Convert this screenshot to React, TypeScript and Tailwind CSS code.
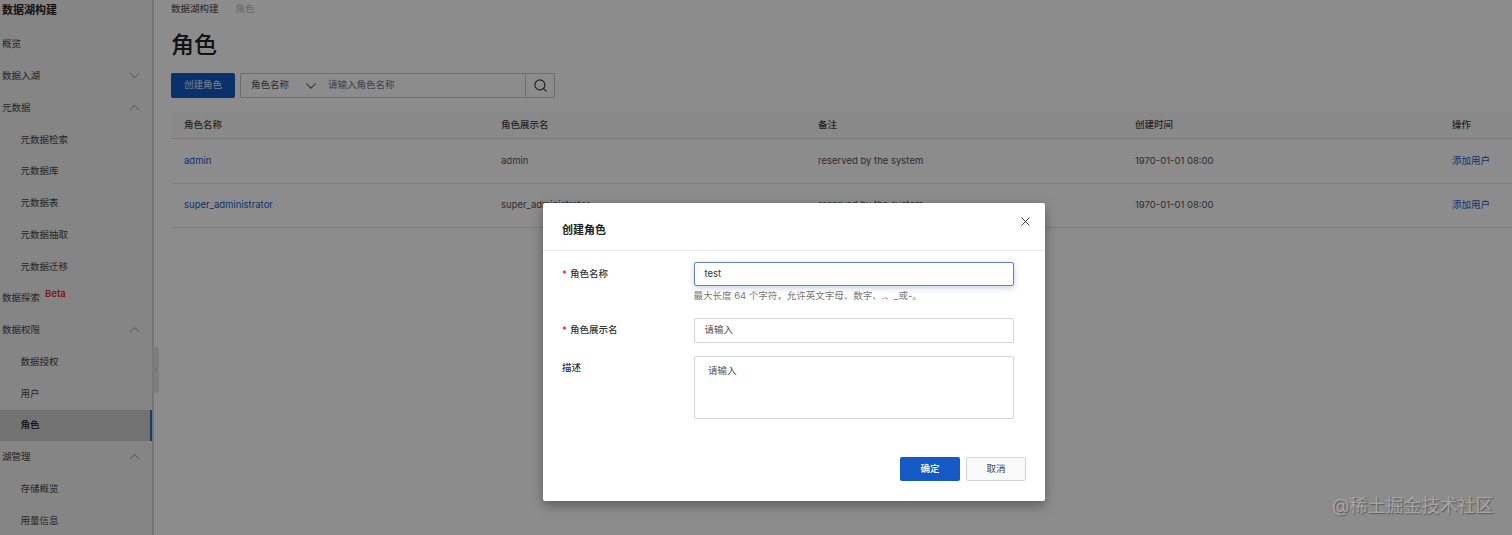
import { ChevronDown, ChevronUp, ChevronLeft, Search, X } from "lucide-react";

const font = { fontFamily: 'Inter, "Noto Sans CJK SC", sans-serif' };

type NavItem = { label: string; sub?: boolean; arrow?: "up" | "down"; active?: boolean; beta?: boolean };

const nav: NavItem[] = [
  { label: "概览" },
  { label: "数据入湖", arrow: "down" },
  { label: "元数据", arrow: "up" },
  { label: "元数据检索", sub: true },
  { label: "元数据库", sub: true },
  { label: "元数据表", sub: true },
  { label: "元数据抽取", sub: true },
  { label: "元数据迁移", sub: true },
  { label: "数据探索", beta: true },
  { label: "数据权限", arrow: "up" },
  { label: "数据授权", sub: true },
  { label: "用户", sub: true },
  { label: "角色", sub: true, active: true },
  { label: "湖管理", arrow: "up" },
  { label: "存储概览", sub: true },
  { label: "用量信息", sub: true },
];

const rows = [
  ["admin", "admin", "reserved by the system", "1970-01-01 08:00"],
  ["super_administrator", "super_administrator", "reserved by the system", "1970-01-01 08:00"],
];

function Sidebar() {
  return (
    <aside className="relative w-[154px] shrink-0 border-r-2 border-[#d8d8d8] bg-[#f3f3f3] h-[535px] overflow-hidden">
      <div className="h-[20px] pl-[2px] flex items-center text-[11px] font-bold text-[#222]">数据湖构建</div>
      <div className="pt-[8.5px]">
        {nav.map((n) => (
          <div
            key={n.label}
            className={
              "relative flex items-center h-[31.75px] text-[9.5px] " +
              (n.sub ? "pl-[20.5px] " : "pl-[2px] ") +
              (n.active ? "bg-[#d0d0d0] text-[#111] font-medium" : "text-[#444]")
            }
          >
            <span>{n.label}</span>
            {n.beta && <span className="ml-[5px] -mt-[8px] text-[9.5px] font-semibold text-[#d93026]">Beta</span>}
            {n.arrow === "down" && <ChevronDown className="absolute left-[126px] top-[7px] w-[17px] h-[17px] text-[#888]" strokeWidth={1.2} />}
            {n.arrow === "up" && <ChevronUp className="absolute left-[126px] top-[7px] w-[17px] h-[17px] text-[#888]" strokeWidth={1.2} />}
            {n.active && <span className="absolute right-0 top-0 bottom-0 w-[2px] bg-[#2f6fc4]" />}
          </div>
        ))}
      </div>
    </aside>
  );
}

function Page() {
  return (
    <main className="flex-1 min-w-0 pl-[17px] bg-white h-[535px] overflow-hidden">
      <div className="h-[19px] flex items-center text-[9.5px] text-[#444]">
        <span>数据湖构建</span>
        <span className="ml-[17px] text-[#c4c4c4]">角色</span>
      </div>
      <h1 className="mt-[11px] h-[30px] leading-[30px] text-[23px] font-medium text-[#222]">角色</h1>
      <div className="mt-[13px] flex items-center h-[25px]">
        <button className="w-[64px] h-[25px] rounded-[2px] bg-[#1559c4] text-[#dcebff] text-[9.5px]">创建角色</button>
        <div className="ml-[5px] w-[315px] h-[25px] flex items-center border border-[#c8c8c8] rounded-[1px]">
          <span className="pl-[10px] w-[61px] text-[9.5px] text-[#555] shrink-0">角色名称</span>
          <ChevronDown className="w-[18px] h-[18px] text-[#444] shrink-0" strokeWidth={1.4} />
          <span className="ml-[8px] flex-1 text-[9.5px] text-[#777]">请输入角色名称</span>
          <span className="w-[29px] h-full border-l border-[#c8c8c8] flex items-center justify-center">
            <Search className="w-[15px] h-[15px] text-[#333]" strokeWidth={1.8} />
          </span>
        </div>
      </div>
      <div className="mt-[14px]">
        <div className="grid grid-cols-[317px_317px_317px_317px_1fr] h-[27px] items-center bg-[#fafafa] border-b border-[#e4e4e4] text-[9.5px] font-medium text-[#444]">
          {["角色名称", "角色展示名", "备注", "创建时间", "操作"].map((h) => (
            <span key={h} className="pl-[13px]">{h}</span>
          ))}
        </div>
        {rows.map((r) => (
          <div key={r[0]} className="grid grid-cols-[317px_317px_317px_317px_1fr] h-[44.5px] items-center border-b border-[#e4e4e4] text-[9.5px] text-[#555]">
            <span className="pl-[13px] text-[#1b58c4]">{r[0]}</span>
            <span className="pl-[13px]">{r[1]}</span>
            <span className="pl-[13px]">{r[2]}</span>
            <span className="pl-[13px]">{r[3]}</span>
            <span className="pl-[13px] text-[#1b58c4]">添加用户</span>
          </div>
        ))}
      </div>
    </main>
  );
}

function Dialog() {
  return (
    <div className="absolute z-20 left-[543px] top-[203px] w-[502px] h-[298px] bg-white rounded-[2px] shadow-[0_4px_12px_rgba(0,0,0,0.35)] flex flex-col">
      <div className="relative h-[48px] border-b border-[#eaeaea] pl-[19px] pt-[18px] text-[11px] font-semibold leading-[18px] text-[#222]">
        创建角色
        <X className="absolute right-[12px] top-[11px] w-[15px] h-[15px] text-[#333]" strokeWidth={1.5} />
      </div>
      <div className="pt-[11px] pl-[19px] text-[9.5px] text-[#333]">
        <div className="flex">
          <label className="w-[131.5px] h-[24px] flex items-center font-medium"><span className="text-[#d6203c] mr-[3px] w-[5px]">*</span>角色名称</label>
          <div>
            <div className="w-[320px] h-[24px] border border-[#5f84b0] rounded-[2px] pl-[10px] flex items-center shadow-[0_2px_6px_rgba(30,80,160,0.25)] text-[#333]">test</div>
            <div className="mt-[3px] h-[14px] leading-[14px] text-[9.5px] text-[#777]">最大长度 64 个字符，允许英文字母、数字、.、_或-。</div>
          </div>
        </div>
        <div className="flex mt-[15px]">
          <label className="w-[131.5px] h-[25px] flex items-center font-medium"><span className="text-[#d6203c] mr-[3px] w-[5px]">*</span>角色展示名</label>
          <div className="w-[320px] h-[25px] border border-[#d4d4d4] rounded-[2px] pl-[10px] flex items-center text-[#555]">请输入</div>
        </div>
        <div className="flex mt-[13px]">
          <label className="w-[131.5px] pt-[5px] font-medium">描述</label>
          <div className="w-[320px] h-[63px] border border-[#d4d4d4] rounded-[2px] pl-[13.5px] pt-[7px] text-[#555]">请输入</div>
        </div>
      </div>
      <div className="mt-auto pb-[20px] pr-[19px] flex justify-end gap-[6px] text-[9.5px]">
        <button className="w-[60px] h-[24.5px] rounded-[2px] bg-[#1559c4] text-white font-medium">确定</button>
        <button className="w-[60px] h-[24.5px] rounded-[2px] border border-[#d4d4d4] bg-[#f9f9f9] text-[#444]">取消</button>
      </div>
    </div>
  );
}

export default function App() {
  return (
    <div className="relative w-[1512px] h-[535px] overflow-hidden bg-white" style={font}>
      <div className="flex">
        <Sidebar />
        <Page />
      </div>
      <div className="absolute left-[153px] top-[347px] w-[6px] h-[46px] bg-[#e6e6e6] flex items-center justify-center rounded-r-[2px]">
        <ChevronLeft className="w-[8px] h-[10px] text-[#666]" strokeWidth={1.5} />
      </div>
      <div className="absolute inset-0 z-10 bg-[rgba(0,0,0,0.45)]" />
      <Dialog />
      <div className="absolute z-30 left-[1332px] top-[494px] text-[18px] leading-[24px] text-[#a6a6a6] [text-shadow:1px_1px_1px_rgba(70,70,70,0.7)] whitespace-nowrap">@稀土掘金技术社区</div>
    </div>
  );
}
